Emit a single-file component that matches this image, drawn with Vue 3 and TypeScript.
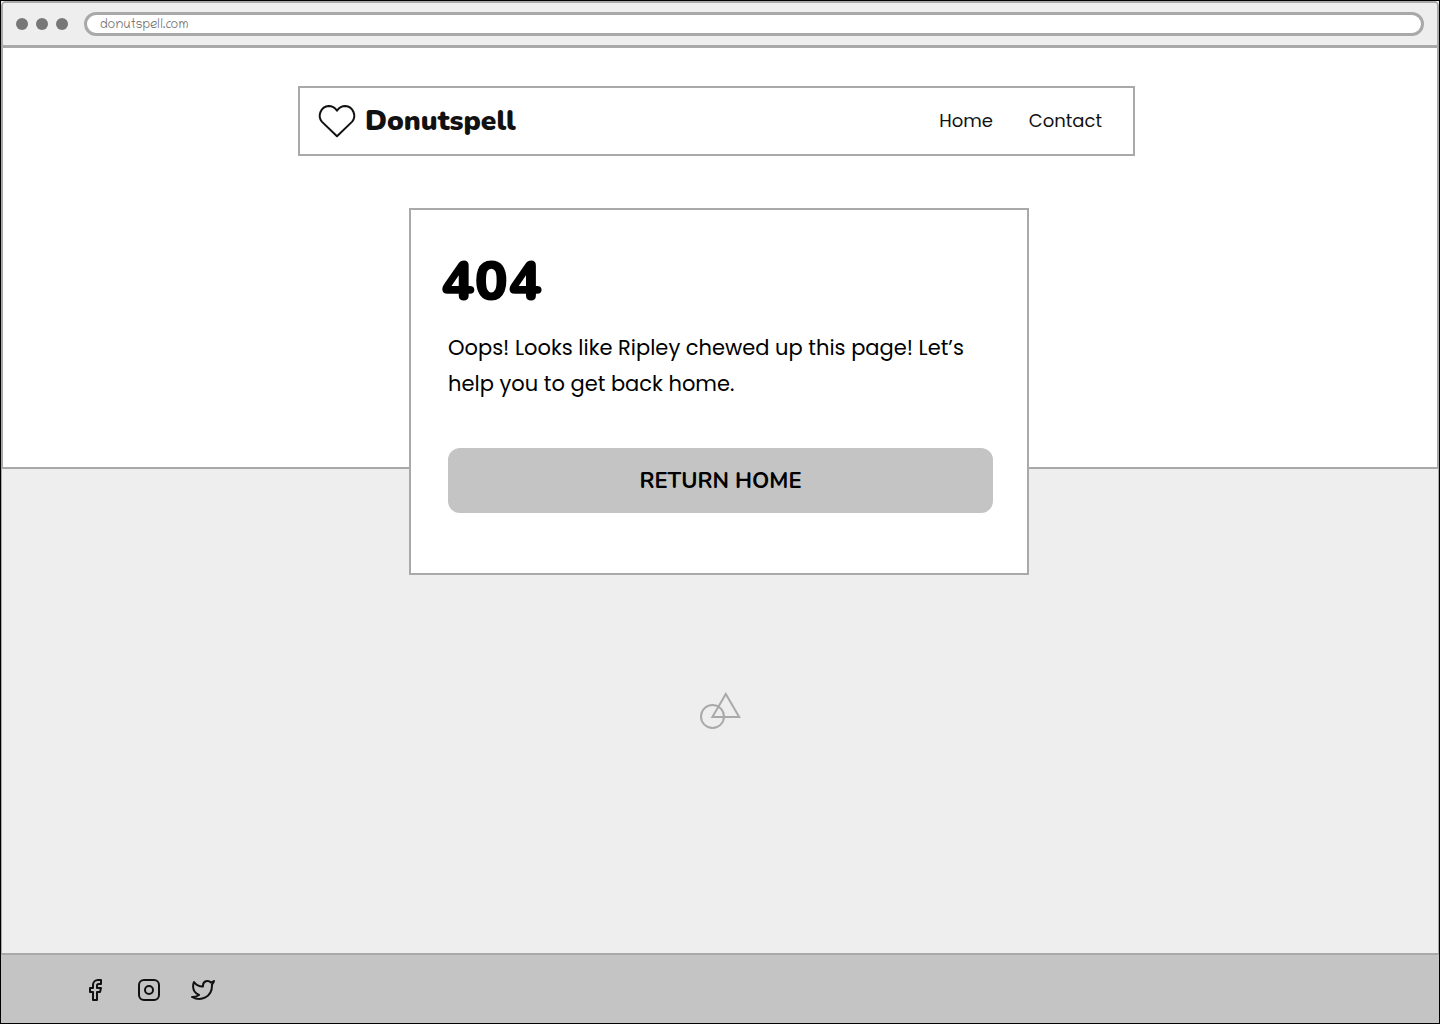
<script setup lang="ts">
import { ref } from 'vue'

interface NavLink {
  label: string
  href: string
}

const address = ref<string>('donutspell.com')

const links: NavLink[] = [
  { label: 'Home', href: '#home' },
  { label: 'Contact', href: '#contact' },
]

function goHome(): void {
  window.location.hash = 'home'
}
</script>

<template>
  <div class="page">
    <div class="window">
      <div class="toolbar">
        <span class="dots"><i></i><i></i><i></i></span>
        <input v-model="address" class="address" type="text" aria-label="Address" />
      </div>

      <div class="hero">
        <div class="container">
          <header class="site-header">
            <a class="brand" href="#home">
              <svg width="40" height="36" viewBox="0 0 40 36" fill="none" stroke="currentColor" stroke-width="2" stroke-linejoin="round" aria-hidden="true">
                <path d="M20 33.2L4.8 18.6A9.7 9.7 0 0 1 11.7 3C15 3 17.8 4.6 20 7.6C22.2 4.6 25 3 28.3 3A9.7 9.7 0 0 1 35.2 18.6Z" />
              </svg>
              <span>Donutspell</span>
            </a>
            <nav class="nav">
              <a v-for="link in links" :key="link.label" :href="link.href">{{ link.label }}</a>
            </nav>
          </header>
        </div>

        <main class="card">
          <h1>404</h1>
          <div class="card-body">
            <p>Oops! Looks like Ripley chewed up this page! Let’s help you to get back home.</p>
            <button type="button" @click="goHome">RETURN HOME</button>
          </div>
        </main>
      </div>
    </div>

    <section class="backdrop">
      <svg width="44" height="40" viewBox="0 0 44 40" fill="none" stroke="#a9a9a9" stroke-width="2" aria-hidden="true">
        <circle cx="14.5" cy="25.5" r="11.5" />
        <path d="M27.8 3L41.2 26H14.4Z" />
      </svg>
    </section>

    <footer class="footer">
      <a href="#facebook" aria-label="Facebook">
        <svg width="24" height="24" viewBox="0 0 24 24" aria-hidden="true">
          <path d="M18 2V6H15.6A1.6 1.6 0 0 0 14 7.6V10H18L17 14H14V22H10V14H7V10H10V7A5 5 0 0 1 15 2Z" />
        </svg>
      </a>
      <a href="#instagram" aria-label="Instagram">
        <svg width="24" height="24" viewBox="0 0 24 24" aria-hidden="true">
          <rect x="2" y="2" width="20" height="20" rx="5" />
          <circle cx="12" cy="12" r="4" />
        </svg>
      </a>
      <a href="#twitter" aria-label="Twitter">
        <svg width="24" height="24" viewBox="0 0 24 24" aria-hidden="true">
          <path d="M23 3a10.9 10.9 0 0 1-3.14 1.53 4.48 4.48 0 0 0-7.86 3v1A10.66 10.66 0 0 1 3 4s-4 9 5 13a11.64 11.64 0 0 1-7 2c9 5 20 0 20-11.5a4.5 4.5 0 0 0-.08-.83A7.72 7.72 0 0 0 23 3z" />
        </svg>
      </a>
    </footer>
  </div>
</template>

<style>
body {
  background: #fff;
}
</style>

<style scoped>
.page {
  box-sizing: border-box;
  min-height: 100vh;
  display: flex;
  flex-direction: column;
  border: 1px solid #000;
  background: #eee;
  color: #000;
  font-family: Poppins, Inter, sans-serif;
}

.window {
  border: 2px solid #a9a9a9;
  border-radius: 5px 5px 0 0;
  background: #fff;
}

.toolbar {
  display: flex;
  align-items: center;
  gap: 16px;
  padding: 9px 13px;
  border-bottom: 3px solid #a9a9a9;
  border-radius: 3px 3px 0 0;
  background: #eee;
}

.dots {
  display: flex;
  gap: 8px;
}

.dots i {
  width: 12px;
  height: 12px;
  border-radius: 50%;
  background: #777;
}

.address {
  flex: 1;
  min-width: 0;
  box-sizing: border-box;
  height: 24px;
  padding: 2px 13px 0;
  border: 3px solid #a9a9a9;
  border-radius: 12px;
  background: #fff;
  color: #777;
  font: 400 13px/16px Chilanka, Inter, sans-serif;
}

.hero {
  padding: 38px 16px 0 14px;
}

.container {
  max-width: 842px;
  margin: 0 auto 52px;
}

.site-header {
  box-sizing: border-box;
  max-width: 837px;
  min-height: 70px;
  display: flex;
  align-items: center;
  justify-content: space-between;
  padding: 0 31px 0 17px;
  border: 2px solid #a9a9a9;
}

.brand {
  display: flex;
  align-items: center;
  gap: 8px;
  color: #111;
  font: 900 28px/36px Nunito, "Open Sans", sans-serif;
  text-decoration: none;
}

.nav {
  display: flex;
  gap: 36px;
}

.nav a {
  color: #111;
  font-size: 18px;
  line-height: 28px;
  text-decoration: none;
}

.card {
  position: relative;
  box-sizing: border-box;
  max-width: 620px;
  margin: 0 auto -108px;
  padding: 36px 34px 60px 30px;
  border: 2px solid #a9a9a9;
  background: #fff;
}

h1 {
  margin: 0;
  font: 900 56px/72px Nunito, "Open Sans", sans-serif;
}

.card-body {
  padding: 12px 0 0 7px;
}

p {
  margin: 0 0 46px;
  font-size: 21px;
  line-height: 36px;
}

button {
  display: block;
  width: 100%;
  height: 65px;
  padding: 0;
  border: 0;
  border-radius: 12px;
  background: #c4c4c4;
  color: #000;
  font: 700 22px/30px Nunito, "Open Sans", sans-serif;
  cursor: pointer;
}

.backdrop {
  flex: 1;
  display: flex;
  align-items: center;
  justify-content: center;
  border: solid #a9a9a9;
  border-width: 0 1px;
}

.footer {
  display: flex;
  align-items: center;
  gap: 30px;
  min-height: 66px;
  padding: 2px 82px 0;
  border-top: 2px solid #a9a9a9;
  background: #c4c4c4;
}

.footer a {
  display: flex;
}

.footer svg {
  fill: none;
  stroke: #111;
  stroke-width: 2;
  stroke-linejoin: round;
}
</style>
